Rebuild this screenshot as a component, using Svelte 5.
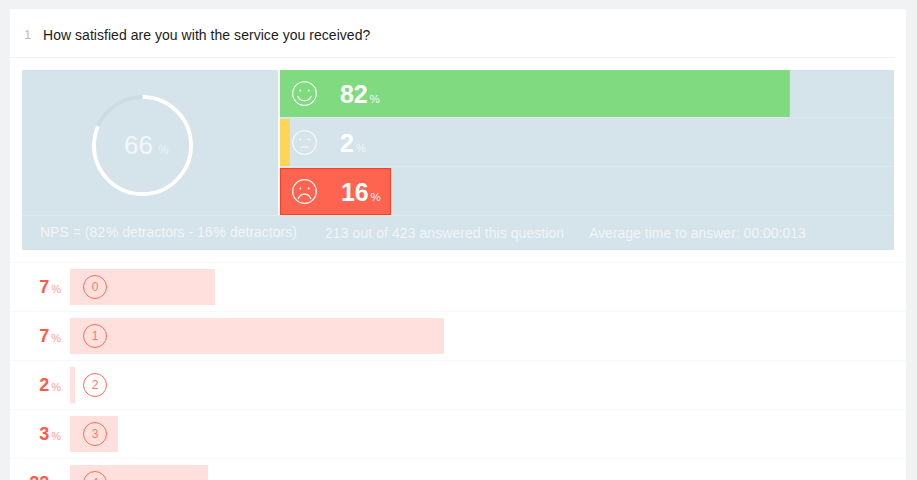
<script lang="ts">
  const bars = [
    { pct: 82, cls: "good", width: 510, face: "smile" },
    { pct: 2, cls: "neutral", width: 10, face: "flat" },
    { pct: 16, cls: "bad", width: 111, face: "sad" },
  ];

  const scores = [
    { pct: 7, score: 0, width: 144.5 },
    { pct: 7, score: 1, width: 374 },
    { pct: 2, score: 2, width: 5 },
    { pct: 3, score: 3, width: 48 },
    { pct: 22, score: 4, width: 138 },
  ];

  // ring stops short of closing, gap sits left of 12 o'clock
  const circumference = 2 * Math.PI * 48.5;
  const progress = circumference * 0.814;
</script>

<main class="page">
  <section class="card">
    <header class="question">
      <span class="number">1</span>
      <h1>How satisfied are you with the service you received?</h1>
    </header>

    <div class="summary">
      <div class="top">
        <div class="score">
          <svg class="ring" viewBox="0 0 101 101" width="101" height="101" aria-hidden="true">
            <circle cx="50.5" cy="50.5" r="48.5" class="ring-track" />
            <circle
              cx="50.5"
              cy="50.5"
              r="48.5"
              class="ring-value"
              stroke-dasharray="{progress} {circumference}"
              transform="rotate(-90 50.5 50.5)"
            />
          </svg>
          <div class="score-label">66<small>%</small></div>
        </div>

        <div class="bars">
          {#each bars as bar}
            <div class="bar-row">
              <div class="fill {bar.cls}" style="width: {bar.width}px"></div>
              <div class="bar-content">
                <svg class="face {bar.cls}" viewBox="0 0 26 26" width="26" height="26" aria-hidden="true">
                  <circle cx="12.5" cy="12.5" r="11.8" />
                  <circle cx="8.3" cy="9.5" r="1" class="eye" />
                  <circle cx="16.7" cy="9.5" r="1" class="eye" />
                  {#if bar.face === "smile"}
                    <path d="M5.8 15.4c1.2 3 3.7 4.4 6.7 4.4s5.5-1.4 6.7-4.4" />
                  {:else if bar.face === "flat"}
                    <path d="M9 17h7" />
                  {:else}
                    <path d="M6.3 19.6c1.2-3 3.4-4.4 6.2-4.4s5 1.4 6.2 4.4" />
                  {/if}
                </svg>
                <div class="bar-value" class:narrow={bar.pct === 16}>{bar.pct}<small>%</small></div>
              </div>
            </div>
          {/each}
        </div>
      </div>

      <footer class="stats">
        <span class="nps">NPS = (82<i>%</i> detractors - 16<i>%</i> detractors)</span>
        <span class="answered">213 out of 423 answered this question</span>
        <span>Average time to answer: 00:00:013</span>
      </footer>
    </div>

    <ul class="scores">
      {#each scores as row}
        <li>
          <div class="row-pct">{row.pct}<small>%</small></div>
          <div class="track">
            <div class="row-fill" style="width: {row.width}px"></div>
            <span class="badge">{row.score}</span>
          </div>
        </li>
      {/each}
    </ul>
  </section>
</main>

<style>
  :global(body) {
    margin: 0;
    background: #f0f2f4;
    overflow: hidden;
  }

  .page {
    height: 480px;
    overflow: hidden;
    padding: 9px 11px 0 10px;
    box-sizing: border-box;
    font-family: "Liberation Sans", Arial, sans-serif;
  }

  .card {
    background: #fff;
    padding-bottom: 40px;
  }

  .question {
    display: flex;
    align-items: center;
    height: 45px;
    margin-right: 12px;
    padding: 3px 0 0 14px;
    border-bottom: 1px solid #f0f2f4;
  }

  .number {
    width: 19px;
    font-size: 13px;
    color: #b9bdc0;
  }

  h1 {
    margin: 0;
    font-size: 14px;
    font-weight: 400;
    letter-spacing: 0.04px;
    color: #1b1b1b;
  }

  .summary {
    margin: 12px 12px 0;
    background: #d5e3ea;
    height: 180px;
  }

  .top {
    display: flex;
    height: 145px;
    border-bottom: 1px solid #dde9ee;
  }

  .score {
    position: relative;
    flex: 0 0 256px;
    display: flex;
    align-items: center;
    justify-content: center;
    border-right: 2px solid #fff;
  }

  .ring {
    margin: 6px 16px 0 0;
  }

  .ring circle {
    fill: none;
    stroke-width: 4;
  }

  .ring-track {
    stroke: #cddbe2;
  }

  .ring-value {
    stroke: #fff;
  }

  .score-label {
    position: absolute;
    top: 57px;
    left: 102px;
    font-size: 26px;
    line-height: 36px;
    color: #f2f7fa;
  }

  .score-label small {
    margin-left: 5px;
    font-size: 12px;
    color: #e9f1f5;
  }

  .bars {
    flex: 1;
    display: flex;
    flex-direction: column;
    gap: 1px;
  }

  .bar-row {
    position: relative;
    flex: 0 0 48px;
    border-bottom: 1px solid #dde9ee;
    box-sizing: border-box;
  }

  .bar-row:last-child {
    flex-basis: 47px;
    border-bottom: 0;
  }

  .fill {
    position: absolute;
    inset: 0 auto 0 0;
    box-sizing: border-box;
  }

  .fill.good {
    background: #80da80;
    border-right: 1px solid #8ddf8d;
  }

  .fill.neutral {
    background: #ffd557;
  }

  .fill.bad {
    background: #ff6450;
    border: 1px solid #ff3d1f;
  }

  .bar-content {
    position: relative;
    display: flex;
    align-items: center;
    height: 100%;
    padding-left: 12px;
  }

  .face {
    flex: none;
    fill: none;
    stroke: #fff;
    stroke-width: 1.1;
    stroke-linecap: round;
  }

  .face.neutral {
    opacity: 0.9;
  }

  .face.bad {
    stroke-width: 1.3;
  }

  .face .eye {
    fill: #fff;
    stroke: none;
  }

  .bar-value {
    position: absolute;
    left: 60px;
    top: 50%;
    transform: translateY(-48%);
    font-size: 25px;
    font-weight: 700;
    letter-spacing: -0.2px;
    color: #fff;
  }

  .bar-value.narrow {
    left: 61px;
  }

  .bar-value small {
    margin-left: 2px;
    font-size: 11.5px;
    font-weight: 400;
    letter-spacing: 0;
    color: #f2f7f5;
  }

  .stats {
    display: flex;
    align-items: center;
    height: 34px;
    padding-left: 18px;
    font-size: 14px;
    color: #f0f5f8;
    white-space: nowrap;
  }

  .stats i {
    font-style: normal;
    margin-left: 1px;
  }

  .nps {
    width: 285px;
    margin-bottom: 3px;
  }

  .answered {
    width: 264px;
    letter-spacing: 0.07px;
  }

  .scores {
    list-style: none;
    margin: 12px 0 0;
    padding: 0;
    border-top: 1px solid #f8f9fa;
  }

  .scores li {
    display: flex;
    align-items: center;
    height: 49px;
    padding: 6px 0;
    box-sizing: border-box;
    border-bottom: 1px solid #f8f9fa;
  }

  .row-pct {
    flex: 0 0 51px;
    text-align: right;
    font-size: 18px;
    font-weight: 700;
    color: #ff5a45;
  }

  .row-pct small {
    margin-left: 2px;
    font-size: 11px;
    font-weight: 400;
    color: #ff9d90;
  }

  .track {
    position: relative;
    flex: 1;
    margin-left: 9px;
    height: 36px;
    display: flex;
    align-items: center;
  }

  .row-fill {
    position: absolute;
    inset: 0 auto 0 0;
    background: #ffe0dc;
  }

  .badge {
    position: relative;
    margin-left: 13px;
    width: 22px;
    height: 22px;
    border: 1px solid #ff6a57;
    border-radius: 50%;
    display: flex;
    align-items: center;
    justify-content: center;
    font-size: 12px;
    color: #ff7a69;
  }
</style>
